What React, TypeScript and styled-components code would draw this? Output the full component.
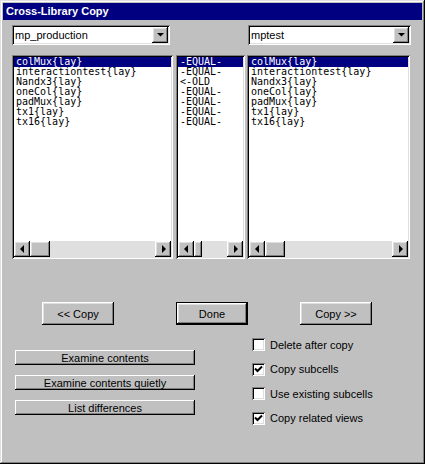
import React from 'react';
import styled, { createGlobalStyle } from 'styled-components';

const Global = createGlobalStyle`
  html, body { margin: 0; padding: 0; background: #c0c0c0; }
  body { font-family: "Liberation Sans", Arial, sans-serif; }
`;

const raised = `box-shadow: inset -1px -1px #000, inset 1px 1px #fff, inset -2px -2px #808080, inset 2px 2px #dfdfdf;`;
const sunken = `box-shadow: inset 1px 1px #808080, inset -1px -1px #fff, inset 2px 2px #000, inset -2px -2px #dfdfdf;`;

const Window = styled.div`
  width: 425px;
  height: 464px;
  box-sizing: border-box;
  padding: 3px;
  background: #c0c0c0;
  box-shadow: inset -1px -1px #000, inset 1px 1px #dfdfdf, inset -2px -2px #808080, inset 2px 2px #fff;
  display: flex;
  flex-direction: column;
`;

const TitleBar = styled.div`
  height: 17px;
  background: #000080;
  color: #fff;
  font-weight: bold;
  font-size: 11px;
  line-height: 17px;
  padding-left: 3px;
`;

const ComboRow = styled.div`
  display: flex;
  justify-content: space-between;
  margin: 5px 11px 0 9px;
`;

const Combo = styled.div<{ $w: number }>`
  width: ${p => p.$w}px;
  height: 20px;
  box-sizing: border-box;
  padding: 2px;
  background: #fff;
  ${sunken}
  display: flex;
`;

const ComboText = styled.div`
  flex: 1;
  font-size: 11px;
  line-height: 16px;
  padding-left: 1px;
  color: #000;
`;

const DropButton = styled.div`
  width: 16px;
  height: 16px;
  background: #c0c0c0;
  ${raised}
  display: flex;
  align-items: center;
  justify-content: center;
`;

const ListsRow = styled.div`
  display: flex;
  margin: 10px 0 0 9px;
  height: 204px;
`;

const ListBox = styled.div<{ $w: number; $ml: number }>`
  width: ${p => p.$w}px;
  margin-left: ${p => p.$ml}px;
  box-sizing: border-box;
  padding: 2px;
  background: #fff;
  ${sunken}
  display: flex;
  flex-direction: column;
`;

const Items = styled.div`
  flex: 1;
  overflow: hidden;
  font-family: "DejaVu Sans Mono", "Liberation Mono", monospace;
  font-size: 10px;
  line-height: 10px;
`;

const Item = styled.div<{ $sel?: boolean }>`
  height: 10px;
  padding-left: 2px;
  white-space: pre;
  background: ${p => (p.$sel ? '#000080' : 'transparent')};
  color: ${p => (p.$sel ? '#fff' : '#000')};
`;

const HScroll = styled.div`
  height: 16px;
  display: flex;
  background: #dfdfdf;
  flex: none;
`;

const ScrollBtn = styled.div`
  width: 16px;
  height: 16px;
  flex: none;
  background: #c0c0c0;
  ${raised}
  display: flex;
  align-items: center;
  justify-content: center;
`;

const Thumb = styled.div<{ $w: number }>`
  width: ${p => p.$w}px;
  height: 16px;
  flex: none;
  background: #c0c0c0;
  ${raised}
`;

const Track = styled.div`
  flex: 1;
`;

const ButtonRow = styled.div`
  display: flex;
  margin-top: 43px;
  height: 23px;
`;

const PushButton = styled.button<{ $ml: number; $def?: boolean }>`
  width: 72px;
  height: 23px;
  margin: 0 0 0 ${p => p.$ml}px;
  padding: 0;
  border: none;
  background: #c0c0c0;
  color: #000;
  font-family: "Liberation Sans", Arial, sans-serif;
  font-size: 11px;
  box-shadow: ${p =>
    p.$def
      ? 'inset 0 0 0 1px #000, inset -2px -2px #000, inset 2px 2px #fff, inset -3px -3px #808080, inset 3px 3px #dfdfdf'
      : 'inset -1px -1px #000, inset 1px 1px #fff, inset -2px -2px #808080, inset 2px 2px #dfdfdf'};
`;

const Bottom = styled.div`
  display: flex;
  margin-top: 13px;
`;

const LeftCol = styled.div`
  display: flex;
  flex-direction: column;
  gap: 10px;
  margin-left: 12px;
  padding-top: 12px;
  width: 180px;
`;

const SmallButton = styled.button`
  height: 15px;
  width: 180px;
  padding: 0;
  border: none;
  background: #c0c0c0;
  color: #000;
  font-family: "Liberation Sans", Arial, sans-serif;
  font-size: 11px;
  line-height: 14px;
  box-shadow: inset -1px -1px #000, inset 1px 1px #fff, inset -2px -2px #808080;
`;

const RightCol = styled.div`
  display: flex;
  flex-direction: column;
  gap: 11.5px;
  margin-left: 57px;
`;

const CheckRow = styled.label`
  display: flex;
  align-items: center;
  gap: 5px;
  height: 13px;
  font-size: 11px;
  color: #000;
`;

const Box = styled.span`
  width: 13px;
  height: 13px;
  box-sizing: border-box;
  background: #fff;
  ${sunken}
  display: flex;
  align-items: center;
  justify-content: center;
`;

const Tri: React.FC<{ dir: 'left' | 'right' | 'down' }> = ({ dir }) => {
  const pts =
    dir === 'left' ? '5,0 5,8 1,4' : dir === 'right' ? '2,0 2,8 6,4' : '0,2 7,2 3.5,5.5';
  return (
    <svg width={dir === 'down' ? 7 : 7} height={dir === 'down' ? 8 : 8} viewBox={dir === 'down' ? '0 0 7 8' : '0 0 7 8'}>
      <polygon points={pts} fill="#000" />
    </svg>
  );
};

const Check = () => (
  <svg width="9" height="9" viewBox="0 0 9 9">
    <polyline points="1,3.5 3.5,6 8,1.5" fill="none" stroke="#000" strokeWidth="2" />
  </svg>
);

const Scroller: React.FC<{ thumb: number }> = ({ thumb }) => (
  <HScroll>
    <ScrollBtn>
      <Tri dir="left" />
    </ScrollBtn>
    <Thumb $w={thumb} />
    <Track />
    <ScrollBtn>
      <Tri dir="right" />
    </ScrollBtn>
  </HScroll>
);

const cells = ['colMux{lay}', 'interactiontest{lay}', 'Nandx3{lay}', 'oneCol{lay}', 'padMux{lay}', 'tx1{lay}', 'tx16{lay}'];
const states = ['-EQUAL-', '-EQUAL-', '<-OLD', '-EQUAL-', '-EQUAL-', '-EQUAL-', '-EQUAL-'];

const checks = [
  { label: 'Delete after copy', on: false },
  { label: 'Copy subcells', on: true },
  { label: 'Use existing subcells', on: false },
  { label: 'Copy related views', on: true },
];

export default function App() {
  return (
    <>
      <Global />
      <Window>
        <TitleBar>Cross-Library Copy</TitleBar>
        <ComboRow>
          <Combo $w={158}>
            <ComboText>mp_production</ComboText>
            <DropButton>
              <Tri dir="down" />
            </DropButton>
          </Combo>
          <Combo $w={163}>
            <ComboText>mptest</ComboText>
            <DropButton>
              <Tri dir="down" />
            </DropButton>
          </Combo>
        </ComboRow>
        <ListsRow>
          <ListBox $w={161} $ml={0}>
            <Items>
              {cells.map((c, i) => (
                <Item key={c} $sel={i === 0}>{c}</Item>
              ))}
            </Items>
            <Scroller thumb={20} />
          </ListBox>
          <ListBox $w={69} $ml={3}>
            <Items>
              {states.map((s, i) => (
                <Item key={i} $sel={i === 0}>{s}</Item>
              ))}
            </Items>
            <Scroller thumb={8} />
          </ListBox>
          <ListBox $w={163} $ml={2}>
            <Items>
              {cells.map((c, i) => (
                <Item key={c} $sel={i === 0}>{c}</Item>
              ))}
            </Items>
            <Scroller thumb={20} />
          </ListBox>
        </ListsRow>
        <ButtonRow>
          <PushButton $ml={39}>&lt;&lt; Copy</PushButton>
          <PushButton $ml={62} $def>Done</PushButton>
          <PushButton $ml={52}>Copy &gt;&gt;</PushButton>
        </ButtonRow>
        <Bottom>
          <LeftCol>
            <SmallButton>Examine contents</SmallButton>
            <SmallButton>Examine contents quietly</SmallButton>
            <SmallButton>List differences</SmallButton>
          </LeftCol>
          <RightCol>
            {checks.map(c => (
              <CheckRow key={c.label}>
                <Box>{c.on && <Check />}</Box>
                {c.label}
              </CheckRow>
            ))}
          </RightCol>
        </Bottom>
      </Window>
    </>
  );
}
